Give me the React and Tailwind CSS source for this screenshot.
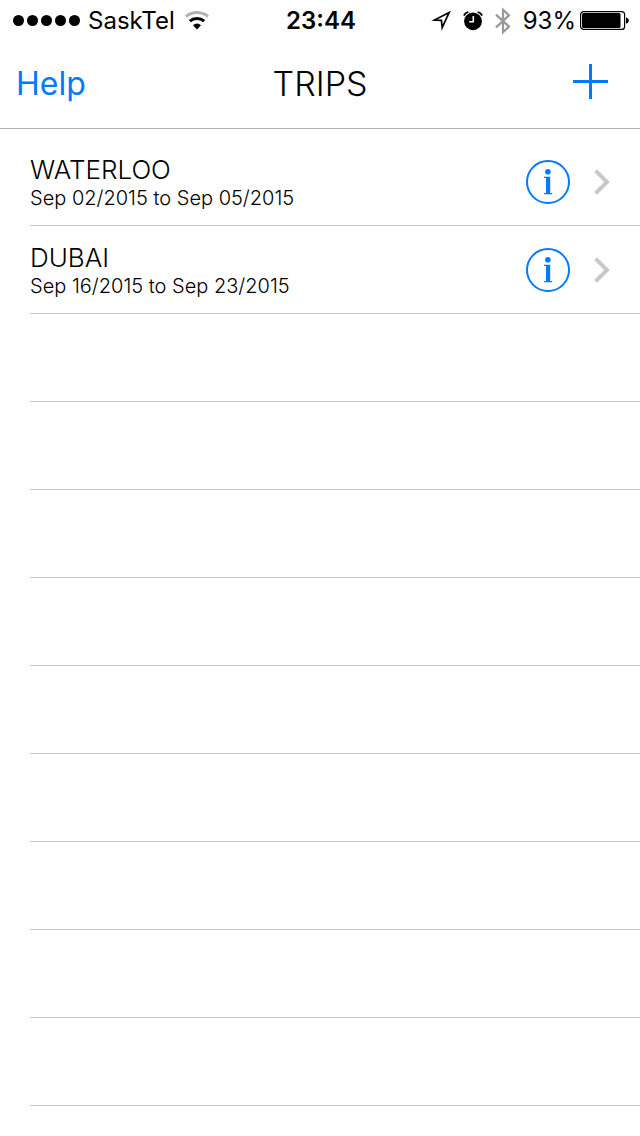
const TRIPS = [
  { id: 1, name: 'WATERLOO', dates: 'Sep 02/2015 to Sep 05/2015' },
  { id: 2, name: 'DUBAI', dates: 'Sep 16/2015 to Sep 23/2015' },
];

const EMPTY_ROWS = 9;

const SignalDots = () => (
  <svg className="w-[68px] h-3" viewBox="0 0 68 12" role="img" aria-label="Signal strength">
    {[6.5, 20.5, 34.5, 48.5, 62.5].map((cx) => (
      <circle key={cx} cx={cx} cy="5.5" r="5.5" />
    ))}
  </svg>
);

const WifiIcon = () => (
  <svg className="w-6 h-5" viewBox="0 0 24 20" fill="none" aria-hidden="true">
    <path d="M0.9 5.6a17 17 0 0 1 22.2 0" stroke="#b2b2b2" strokeWidth="3" />
    <path d="M4.8 10.2a11 11 0 0 1 14.4 0" stroke="#000" strokeWidth="3" />
    <path d="M8 14.2a6.2 6.2 0 0 1 8 0L12 18.4z" fill="#000" />
  </svg>
);

const LocationIcon = () => (
  <svg className="w-5 h-5" viewBox="0 0 20 20" fill="none" aria-hidden="true">
    <path d="M18.2 1.4L3.4 9.1L10.4 9.4L11.2 16.6z" stroke="#000" strokeWidth="1.7" />
  </svg>
);

const AlarmIcon = () => (
  <svg className="w-5 h-5" viewBox="0 0 20 20" fill="none" aria-hidden="true">
    <circle cx="10" cy="10.3" r="8.9" fill="#000" />
    <path d="M1 4.6a5.4 5.4 0 0 1 4.4-3.4M19 4.6a5.4 5.4 0 0 0-4.4-3.4" stroke="#000" strokeWidth="1.8" />
    <path d="M10.3 5v5.8H6.2" stroke="#fff" strokeWidth="1.6" />
  </svg>
);

const BluetoothIcon = () => (
  <svg className="w-4 h-7" viewBox="0 0 16 28" fill="none" aria-hidden="true">
    <path d="M1 7.6L14 19.6L8 25.2V2.8L14 8.4L1 20.4" stroke="#999" strokeWidth="2.2" />
  </svg>
);

const BatteryIcon = () => (
  <svg className="w-[50px] h-5" viewBox="0 0 50 20" fill="none" aria-hidden="true">
    <rect x="0.6" y="0.6" width="44" height="17.8" rx="3" stroke="#000" strokeWidth="1.2" />
    <rect x="2" y="2" width="38.5" height="15" rx="1.5" fill="#000" />
    <path d="M46 6.4c3.8 0.6 3.8 5.6 0 6.2z" fill="#000" />
  </svg>
);

const StatusBar = () => (
  <div className="grid grid-cols-[1fr_auto_1fr] items-center h-10 pt-0.5 pl-3 pr-2.5 text-2xl">
    <div className="flex items-center">
      <SignalDots />
      <span className="ml-2 mr-2.5">SaskTel</span>
      <WifiIcon />
    </div>
    <span className="font-semibold">23:44</span>
    <div className="flex items-center justify-end">
      <LocationIcon />
      <span className="mx-3">
        <AlarmIcon />
      </span>
      <BluetoothIcon />
      <span className="ml-3 mr-1">93%</span>
      <BatteryIcon />
    </div>
  </div>
);

const NavBar = () => (
  <header className="grid grid-cols-[1fr_auto_1fr] items-center h-[89px] px-4 border-b border-[#b2b2b2]">
    <button type="button" className="justify-self-start text-[32px] leading-10 text-[#007aff]">
      Help
    </button>
    <h1 className="text-[34px] leading-10 font-light">TRIPS</h1>
    <button type="button" aria-label="Add trip" className="justify-self-end pb-1 pr-4">
      <svg className="block w-9 h-9" viewBox="0 0 36 36" fill="none">
        <path d="M18.5 0v35M1 17.5h35" stroke="#007aff" strokeWidth="3" />
      </svg>
    </button>
  </header>
);

const InfoIcon = () => (
  <svg className="block w-11 h-11" viewBox="0 0 44 44" fill="none" aria-hidden="true">
    <circle cx="22" cy="22" r="21" stroke="#007aff" strokeWidth="2" />
    <circle cx="21.9" cy="11.7" r="2.8" fill="#007aff" />
    <path d="M18 16.8h6.2v16.2h2v1.3h-8.2V33h2V18.1h-2z" fill="#007aff" />
  </svg>
);

const ChevronIcon = () => (
  <svg className="block w-4 h-7" viewBox="0 0 16 28" fill="none" aria-hidden="true">
    <path d="M1.6 2.6L13 14L1.6 25.4" stroke="#c7c7cc" strokeWidth="4" />
  </svg>
);

const TripRow = ({ trip }) => (
  <li className="flex items-center h-[88px] pr-[30px] border-b border-[#c8c7cc]">
    <a href="#trip" className="flex-1 font-light">
      <span className="block text-[26px] leading-8">{trip.name}</span>
      <span className="block text-xl leading-6">{trip.dates}</span>
    </a>
    <button type="button" aria-label={`Details for ${trip.name}`} className="mr-6">
      <InfoIcon />
    </button>
    <ChevronIcon />
  </li>
);

export default function App() {
  return (
    <div className="min-h-screen bg-white text-black font-['Inter',sans-serif]">
      <StatusBar />
      <NavBar />
      <main>
        <ul className="pt-[9px] pl-[30px]">
          {TRIPS.map((trip) => (
            <TripRow key={trip.id} trip={trip} />
          ))}
          {Array.from({ length: EMPTY_ROWS }, (_, i) => (
            <li key={i} aria-hidden="true" className="h-[88px] border-b border-[#c8c7cc]" />
          ))}
        </ul>
      </main>
    </div>
  );
}
